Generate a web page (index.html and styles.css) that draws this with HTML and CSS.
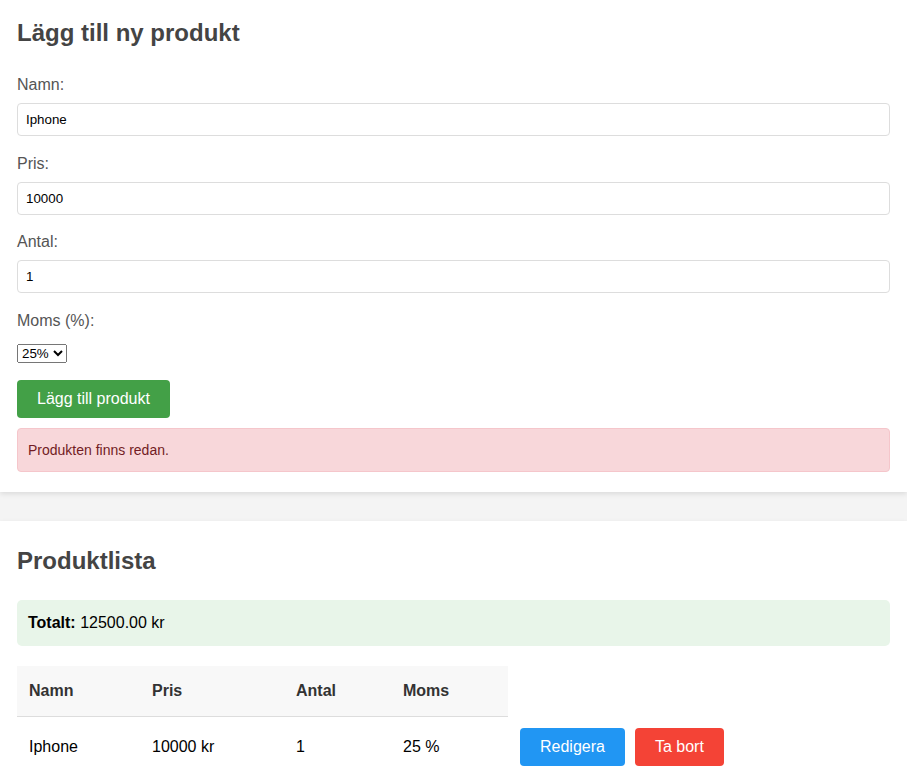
FILE: index.html
```html
<!DOCTYPE html>
<html lang="sv">
<head>
<meta charset="utf-8">
<title>Produkter</title>
<link rel="stylesheet" href="styles.css">
</head>
<body>
<section class="card card-form">
  <h2 class="title title-form">Lägg till ny produkt</h2>
  <form class="form">
    <div class="field">
      <label class="label" for="namn">Namn:</label>
      <input class="input" id="namn" type="text" value="Iphone">
    </div>
    <div class="field">
      <label class="label" for="pris">Pris:</label>
      <input class="input" id="pris" type="text" value="10000">
    </div>
    <div class="field">
      <label class="label" for="antal">Antal:</label>
      <input class="input" id="antal" type="text" value="1">
    </div>
    <div class="field field-select">
      <label class="label" for="moms">Moms (%):</label>
      <select class="select" id="moms">
        <option>25%</option>
        <option>12%</option>
        <option>6%</option>
      </select>
    </div>
    <button class="btn btn-green" type="button">Lägg till produkt</button>
    <div class="error">Produkten finns redan.</div>
  </form>
</section>
<section class="card card-list">
  <h2 class="title title-list">Produktlista</h2>
  <div class="total"><strong>Totalt:</strong> 12500.00 kr</div>
  <table class="table">
    <thead>
      <tr>
        <th class="c-name">Namn</th>
        <th class="c-price">Pris</th>
        <th class="c-qty">Antal</th>
        <th class="c-vat">Moms</th>
      </tr>
    </thead>
    <tbody>
      <tr>
        <td>Iphone</td>
        <td>10000 kr</td>
        <td>1</td>
        <td>25 %</td>
        <td><div class="actions"><button class="btn btn-blue" type="button">Redigera</button><button class="btn btn-red" type="button">Ta bort</button></div></td>
      </tr>
    </tbody>
  </table>
</section>
</body>
</html>
```
FILE: styles.css
```css
html, body {
  margin: 0;
  padding: 0;
}
body {
  background: #f4f4f4;
  font-family: "Liberation Sans", Arial, sans-serif;
  color: #333;
}
.card {
  background: #fff;
  box-shadow: 0 2px 5px rgba(0, 0, 0, 0.1);
  padding: 19px 17px 20px;
}
.card-form {
  margin-bottom: 29px;
}
.card-list {
  padding-top: 26px;
  min-height: 300px;
}
.title {
  margin: 0;
  font-size: 24px;
  line-height: 28px;
  font-weight: bold;
  color: #444;
}
.title-form {
  margin-bottom: 29px;
}
.title-list {
  margin-bottom: 25px;
}
.form {
  margin: 0;
}
.field {
  margin-bottom: 18.5px;
}
.field-select {
  margin-bottom: 17px;
}
.label {
  display: block;
  font-size: 16px;
  line-height: 18px;
  color: #555;
  margin-bottom: 9px;
}
.input {
  display: block;
  box-sizing: border-box;
  width: 100%;
  height: 33px;
  padding: 8px;
  border: 1px solid #ddd;
  border-radius: 4px;
  font-family: "Liberation Sans", Arial, sans-serif;
  font-size: 13.333px;
  line-height: 15px;
  color: #000;
  margin: 0;
}
.select {
  display: block;
  width: 50px;
  margin-top: 14px;
  font-family: "Liberation Sans", Arial, sans-serif;
  font-size: 13.333px;
  color: #000;
}
.btn {
  display: inline-block;
  border: none;
  border-radius: 4px;
  padding: 10px 20px;
  font-family: "Liberation Sans", Arial, sans-serif;
  font-size: 16px;
  line-height: 18px;
  color: #fff;
  cursor: pointer;
}
.btn-green {
  background: #43a047;
  margin-bottom: 10px;
}
.btn-blue {
  background: #2196f3;
}
.btn-red {
  background: #f44336;
}
.error {
  background: #f8d7da;
  border: 1px solid #f5c6cb;
  border-radius: 4px;
  color: #721c24;
  font-size: 14px;
  line-height: 18px;
  padding: 12px 10px;
}
.total {
  background: #e8f5e9;
  border-radius: 5px;
  padding: 14px 11px;
  font-size: 16px;
  line-height: 18px;
  color: #000;
  margin-bottom: 20px;
}
.table {
  border-collapse: collapse;
  font-size: 16px;
  line-height: 18px;
}
.table th {
  background: #f8f8f8;
  text-align: left;
  color: #333;
  font-weight: bold;
  padding: 16px 12px;
  border-bottom: 1px solid #ddd;
}
.table td {
  padding: 12px;
  color: #000;
  vertical-align: middle;
}
.c-name { width: 99px; }
.c-price { width: 120px; }
.c-qty { width: 83px; }
.c-vat { width: 93px; }
.actions {
  display: flex;
  gap: 10px;
}
```
